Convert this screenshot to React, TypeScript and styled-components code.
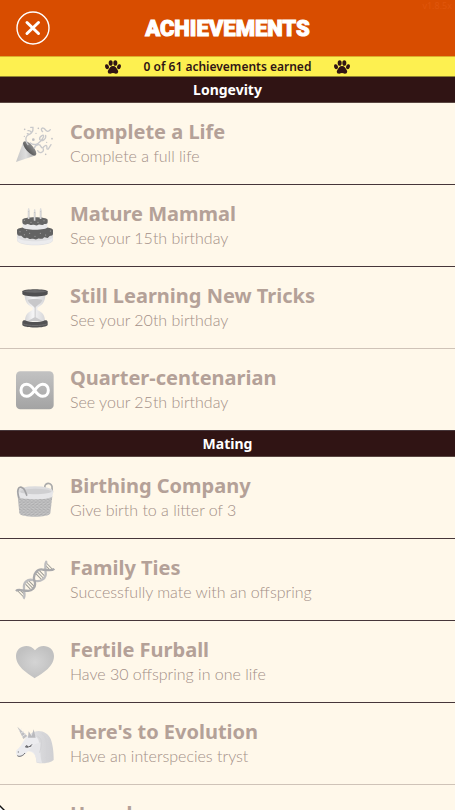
import React from "react";
import styled, { createGlobalStyle } from "styled-components";

const GlobalStyle = createGlobalStyle`
  * { box-sizing: border-box; }
  html, body, #root { height: 100%; }
  body {
    margin: 0;
    overflow: hidden;
    background: #fff8ea;
    font-family: "Noto Sans", "Open Sans", sans-serif;
  }
`;

const Screen = styled.div`
  position: relative;
  height: 100%;
  overflow: hidden;
  display: flex;
  flex-direction: column;
`;

const Header = styled.header`
  flex: none;
  display: grid;
  grid-template-columns: 56px 1fr 56px;
  align-items: center;
  height: 56px;
  background: #d84d00;
`;

const CloseButton = styled.button`
  display: block;
  width: 34px;
  height: 34px;
  margin-left: 16px;
  padding: 0;
  border: 0;
  background: none;
  cursor: pointer;
  svg { display: block; }
`;

const Title = styled.h1`
  margin: 0;
  padding-top: 2px;
  color: #fff;
  font: 900 22px/28px Roboto, sans-serif;
  text-align: center;
  -webkit-text-stroke: 1px #fff;
`;

const Version = styled.span`
  align-self: start;
  justify-self: end;
  padding-right: 3px;
  color: #e0560c;
  font-size: 9px;
  line-height: 12px;
`;

const Progress = styled.div`
  flex: none;
  display: flex;
  justify-content: center;
  align-items: center;
  gap: 23px;
  height: 21px;
  border-top: 1px solid #dcae2c;
  border-bottom: 1px solid #8f8430;
  background: #fdf050;
  color: #301414;
  font-size: 12px;
  font-weight: 600;
  line-height: 18px;
  svg { display: block; }
`;

const List = styled.main`
  flex: 1;
  min-height: 0;
  overflow: hidden;
`;

const SectionTitle = styled.h2`
  margin: 0;
  height: 26px;
  border-bottom: 1px solid #5a4742;
  background: #301414;
  color: #fff;
  font-size: 14px;
  font-weight: 700;
  line-height: 26px;
  text-align: center;
`;

const Items = styled.ul`
  margin: 0;
  padding: 0;
  list-style: none;
`;

const Item = styled.li<{ $soft?: boolean }>`
  display: flex;
  align-items: center;
  gap: 15px;
  height: 82px;
  padding: 0 15px;
  border-bottom: 1px solid ${(p) => (p.$soft ? "#cfc3b8" : "#46363a")};
  &:last-child { border-bottom-color: #46363a; }
  svg { flex: none; display: block; }
`;

const ItemText = styled.div`
  display: flex;
  flex-direction: column;
  padding-bottom: 2px;
`;

const ItemTitle = styled.h3`
  margin: 0;
  color: #b4a198;
  font-size: 20px;
  font-weight: 700;
  line-height: 26px;
`;

const ItemNote = styled.p`
  margin: 0;
  min-height: 22px;
  color: #a38f87;
  font: 300 16px/22px Lato, sans-serif;
`;

const Cursor = styled.svg`
  position: absolute;
  left: 0;
  bottom: 0;
`;

const Paw = () => (
  <svg width="16" height="14" viewBox="0 0 48 42" fill="#301414" aria-hidden="true">
    <ellipse cx="6" cy="20" rx="5.5" ry="7.5" transform="rotate(-18 6 20)" />
    <ellipse cx="17" cy="9" rx="6" ry="8.5" />
    <ellipse cx="31" cy="9" rx="6" ry="8.5" />
    <ellipse cx="42" cy="20" rx="5.5" ry="7.5" transform="rotate(18 42 20)" />
    <path d="M24 18c8 0 10 6 14 12 4 6 0 12-6 11-3-1-5-2-8-2s-5 1-8 2c-6 1-10-5-6-11 4-6 6-12 14-12z" />
  </svg>
);

const Party = () => (
  <svg width="40" height="40" viewBox="45 57 120 120" aria-hidden="true">
    <defs>
      <linearGradient id="cone" x1="0" x2="1"><stop stopColor="#c6c6c6" /><stop offset=".5" stopColor="#dedede" /><stop offset="1" stopColor="#a2a2a2" /></linearGradient>
      <linearGradient id="mouth" x1="0" x2="1"><stop stopColor="#555" /><stop offset="1" stopColor="#8c8c8c" /></linearGradient>
    </defs>
    <path d="M70 110L48 171L108 151Z" fill="url(#cone)" />
    <ellipse cx="89" cy="130" rx="11" ry="27" transform="rotate(-42 89 130)" fill="url(#mouth)" />
    <g fill="none" stroke="#c9c9cb" strokeWidth="4" strokeLinecap="round">
      <path d="M84 119C72 101 79 91 88 88C99 84 92 76 84 77M82 86C91 92 101 80 99 67H92" />
      <path d="M91 114C105 126 124 112 130 97C135 84 117 94 119 103C126 112 139 102 137 91M128 80C119 72 128 65 134 72C140 80 145 82 151 74" />
      <path d="M103 130C106 117 120 116 123 125C128 135 132 120 138 121C145 124 136 134 145 132L153 119M113 137C119 148 132 142 130 132" />
    </g>
    <g fill="#bfbfc2"><circle cx="74" cy="73" r="2.5" /><circle cx="115" cy="70" r="2.5" /><circle cx="100" cy="104" r="4" /><circle cx="156" cy="101" r="2.5" /><circle cx="140" cy="112" r="2" /><circle cx="137" cy="148" r="2.5" /><circle cx="73" cy="94" r="2" /><circle cx="108" cy="85" r="2" /></g>
  </svg>
);

const Cake = () => (
  <svg width="40" height="40" viewBox="45 62 120 120" aria-hidden="true">
    <path d="M51 142V164C51 185 159 185 159 164V142Z" fill="#dfdfe1" />
    <path d="M52 157C66 171 144 171 158 157V164C158 183 52 183 52 164Z" fill="#ececee" />
    <path d="M51 134C51 121 159 121 159 134V145C158 154 149 149 147 154C141 163 136 153 131 157C124 165 119 156 112 161C106 165 99 158 93 161C87 163 84 155 78 158C72 161 67 154 64 151C58 153 51 150 51 143Z" fill="#636363" />
    <path d="M68 111V125C68 136 142 136 142 125V111Z" fill="#e9e9eb" />
    <path d="M67 103C67 93 143 93 143 103V111C141 120 134 113 130 118C124 122 120 115 114 119C107 123 102 116 96 119C90 121 85 114 81 117C75 120 67 117 67 110Z" fill="#666" />
    <g stroke="#c2c2c4" strokeWidth="5"><path d="M86 75V101M104 79V106M122 75V101" /></g>
    <g stroke="#e7e7e8" strokeWidth="2"><path d="M85 79V101M103 83V105M121 79V101" /></g>
    <g fill="#ddd"><ellipse cx="86" cy="73" rx="2.5" ry="5" /><ellipse cx="104" cy="76" rx="2.5" ry="5" /><ellipse cx="122" cy="73" rx="2.5" ry="5" /></g>
    <g fill="#bcbcbc"><circle cx="73" cy="105" r="1.5" /><circle cx="93" cy="111" r="1.5" /><circle cx="114" cy="111" r="1.5" /><circle cx="132" cy="106" r="1.5" /><circle cx="60" cy="139" r="1.5" /><circle cx="73" cy="148" r="1.5" /><circle cx="89" cy="144" r="1.5" /><circle cx="105" cy="153" r="1.5" /><circle cx="121" cy="144" r="1.5" /><circle cx="137" cy="149" r="1.5" /><circle cx="151" cy="137" r="1.5" /><circle cx="80" cy="135" r="1.5" /></g>
  </svg>
);

const Hourglass = () => (
  <svg width="40" height="40" viewBox="45 62 120 120" aria-hidden="true">
    <defs><linearGradient id="glass" x1="0" x2="1"><stop stopColor="#d5d5d7" /><stop offset=".4" stopColor="#f5f5f6" /><stop offset="1" stopColor="#d5d5d7" /></linearGradient></defs>
    <path d="M74 82C74 106 86 114 98 121V128C82 136 75 143 75 163H135C135 143 128 136 112 128V121C124 114 136 106 136 82Z" fill="url(#glass)" />
    <path d="M83 98C91 94 119 94 127 98C124 109 110 114 105 122C99 114 87 109 83 98Z" fill="#c8c8ca" />
    <path d="M104 119H107V150L127 161H83L104 150Z" fill="#cbcbcd" />
    <path d="M67 72C69 64 141 64 143 72V79C141 90 69 90 67 79Z" fill="#505052" />
    <ellipse cx="105" cy="72" rx="35" ry="4" fill="#6a6a6c" />
    <path d="M67 165C68 157 75 159 78 160C91 165 119 165 132 160C135 159 143 157 143 165V173C141 183 69 183 67 173Z" fill="#525254" />
    <path d="M70 170C85 176 125 176 140 170" stroke="#707072" strokeWidth="3" fill="none" />
  </svg>
);

const Infinity8 = () => (
  <svg width="40" height="40" viewBox="45 63 120 120" aria-hidden="true">
    <defs><linearGradient id="tile" x2="0" y2="1"><stop stopColor="#c2c2c2" /><stop offset="1" stopColor="#a3a3a3" /></linearGradient></defs>
    <rect x="48" y="67" width="113" height="114" rx="13" fill="url(#tile)" />
    <path d="M104 124C97 114 90 106 80 106C69 106 63 114 63 124S69 142 80 142C90 142 97 134 104 124C111 114 118 106 128 106C139 106 145 114 145 124S139 142 128 142C118 142 111 134 104 124Z" fill="none" stroke="#fff" strokeWidth="9" />
  </svg>
);

const Basket = () => (
  <svg width="40" height="40" viewBox="45 62 120 120" aria-hidden="true">
    <defs><pattern id="weave" width="12" height="10" patternUnits="userSpaceOnUse"><rect width="12" height="10" fill="#c6c6c6" /><path d="M0 2Q3-1 6 2T12 2M-3 7Q0 4 3 7T9 7T15 7" stroke="#a2a2a4" strokeWidth="2" fill="none" /></pattern></defs>
    <path d="M136 96C128 77 151 72 156 87L157 106" fill="none" stroke="#aaa" strokeWidth="5" />
    <ellipse cx="105" cy="102" rx="54" ry="15" fill="#dcdcde" />
    <ellipse cx="107" cy="103" rx="46" ry="9" fill="#cfcfd1" />
    <path d="M53 116L58 168C61 182 148 182 151 168L157 116Z" fill="url(#weave)" />
    <path d="M50 101C68 114 144 114 160 101L157 118C145 128 66 128 52 118Z" fill="#e6e6e8" />
    <path d="M57 122C48 93 58 86 67 91C77 95 76 108 81 115" fill="none" stroke="#a2a2a4" strokeWidth="5" />
  </svg>
);

const Dna = () => (
  <svg width="40" height="40" viewBox="45 62 120 120" aria-hidden="true">
    <g transform="translate(105 122) rotate(-44)" fill="none">
      <path d="M-60-13V13M-53-9V9M-29-11V11M-22-14V14M-15-12V12M15-12V12M22-14V14M29-11V11M53-9V9M60-13V13" stroke="#9d9c96" strokeWidth="3" />
      <path d="M-64 16C-52 16-49 0-41-5C-31-19-13-19-4-3C5 19 31 20 40 4C49-4 53-16 65-16" stroke="#bdbdbf" strokeWidth="7" />
      <path d="M-64-16C-52-16-49 0-41 5C-31 19-13 19-4 3C5-19 31-20 40-4C49 4 53 16 65 16" stroke="#a9a9ab" strokeWidth="7" />
    </g>
  </svg>
);

const Heart = () => (
  <svg width="40" height="40" viewBox="45 62 120 120" aria-hidden="true">
    <defs><radialGradient id="heart"><stop stopColor="#d4d4d4" /><stop offset="1" stopColor="#c1c1c1" /></radialGradient></defs>
    <path d="M104 171C91 160 48 140 48 104C48 72 89 64 105 87C121 64 162 72 162 104C162 140 119 160 104 171Z" fill="url(#heart)" />
  </svg>
);

const Unicorn = () => (
  <svg width="40" height="40" viewBox="45 63 120 120" aria-hidden="true">
    <defs><linearGradient id="mane" x1="0" x2="1"><stop stopColor="#e0e0e2" /><stop offset="1" stopColor="#cfcfd2" /></linearGradient></defs>
    <path d="M92 92C113 76 143 85 152 108C158 123 161 146 161 171C150 181 127 183 110 179L103 137Z" fill="url(#mane)" />
    <path d="M75 107C85 91 104 91 114 108C124 126 107 143 111 176C107 155 99 145 84 145C73 158 60 165 53 160C47 156 48 148 49 142C58 134 66 124 75 107Z" fill="#ececef" />
    <path d="M84 144C98 140 108 150 110 178L126 180C119 157 122 136 121 118L104 124Z" fill="#e6e6e9" />
    <path d="M112 99C132 109 123 132 119 149M126 91C149 112 137 142 140 176" stroke="#d3d3d6" strokeWidth="3" fill="none" />
    <path d="M52 71L70 108L82 99Z" fill="#bfbfc2" />
    <path d="M58 82L64 78M62 91L71 85M66 101L78 92" stroke="#e5e5e7" strokeWidth="3" />
    <path d="M84 104L86 85L95 99L101 79L107 104Z" fill="#b9b9bd" />
    <path d="M76 130C82 134 91 132 96 124M76 132L84 132L79 126M87 131L94 129M52 158C58 163 70 158 75 150" stroke="#656569" strokeWidth="3" fill="none" />
    <circle cx="55" cy="147" r="2" fill="#858589" />
  </svg>
);

type Achievement = { title: string; note: string; icon: React.ReactNode; soft?: boolean };

const sections: { name: string; items: Achievement[] }[] = [
  {
    name: "Longevity",
    items: [
      { title: "Complete a Life", note: "Complete a full life", icon: <Party /> },
      { title: "Mature Mammal", note: "See your 15th birthday", icon: <Cake /> },
      { title: "Still Learning New Tricks", note: "See your 20th birthday", icon: <Hourglass />, soft: true },
      { title: "Quarter-centenarian", note: "See your 25th birthday", icon: <Infinity8 /> },
    ],
  },
  {
    name: "Mating",
    items: [
      { title: "Birthing Company", note: "Give birth to a litter of 3", icon: <Basket /> },
      { title: "Family Ties", note: "Successfully mate with an offspring", icon: <Dna /> },
      { title: "Fertile Furball", note: "Have 30 offspring in one life", icon: <Heart /> },
      { title: "Here's to Evolution", note: "Have an interspecies tryst", icon: <Unicorn />, soft: true },
      { title: "Horndog", note: "", icon: <svg width="40" height="40" aria-hidden="true" /> },
    ],
  },
];

export default function App() {
  return (
    <Screen>
      <GlobalStyle />
      <Header>
        <CloseButton aria-label="Close">
          <svg width="34" height="34" viewBox="0 0 34 34" fill="none" stroke="#fff" aria-hidden="true">
            <circle cx="17" cy="17" r="16" strokeWidth="1.4" />
            <path d="M11 11.5L22.500 22.500M22.500 11.500L11 22.500" strokeWidth="3" strokeLinecap="round" />
          </svg>
        </CloseButton>
        <Title>ACHIEVEMENTS</Title>
        <Version>v1.8.5x</Version>
      </Header>
      <Progress>
        <Paw />
        <span>0 of 61 achievements earned</span>
        <Paw />
      </Progress>
      <List>
        {sections.map((section) => (
          <section key={section.name}>
            <SectionTitle>{section.name}</SectionTitle>
            <Items>
              {section.items.map((item) => (
                <Item key={item.title} $soft={item.soft}>
                  {item.icon}
                  <ItemText>
                    <ItemTitle>{item.title}</ItemTitle>
                    <ItemNote>{item.note}</ItemNote>
                  </ItemText>
                </Item>
              ))}
            </Items>
          </section>
        ))}
      </List>
      <Cursor width="5" height="5" viewBox="0 0 5 5" aria-hidden="true">
        <path d="M0 0L5 5H0Z" fill="#111" />
        <path d="M0 2L3 5H0Z" fill="#fff" />
      </Cursor>
    </Screen>
  );
}
